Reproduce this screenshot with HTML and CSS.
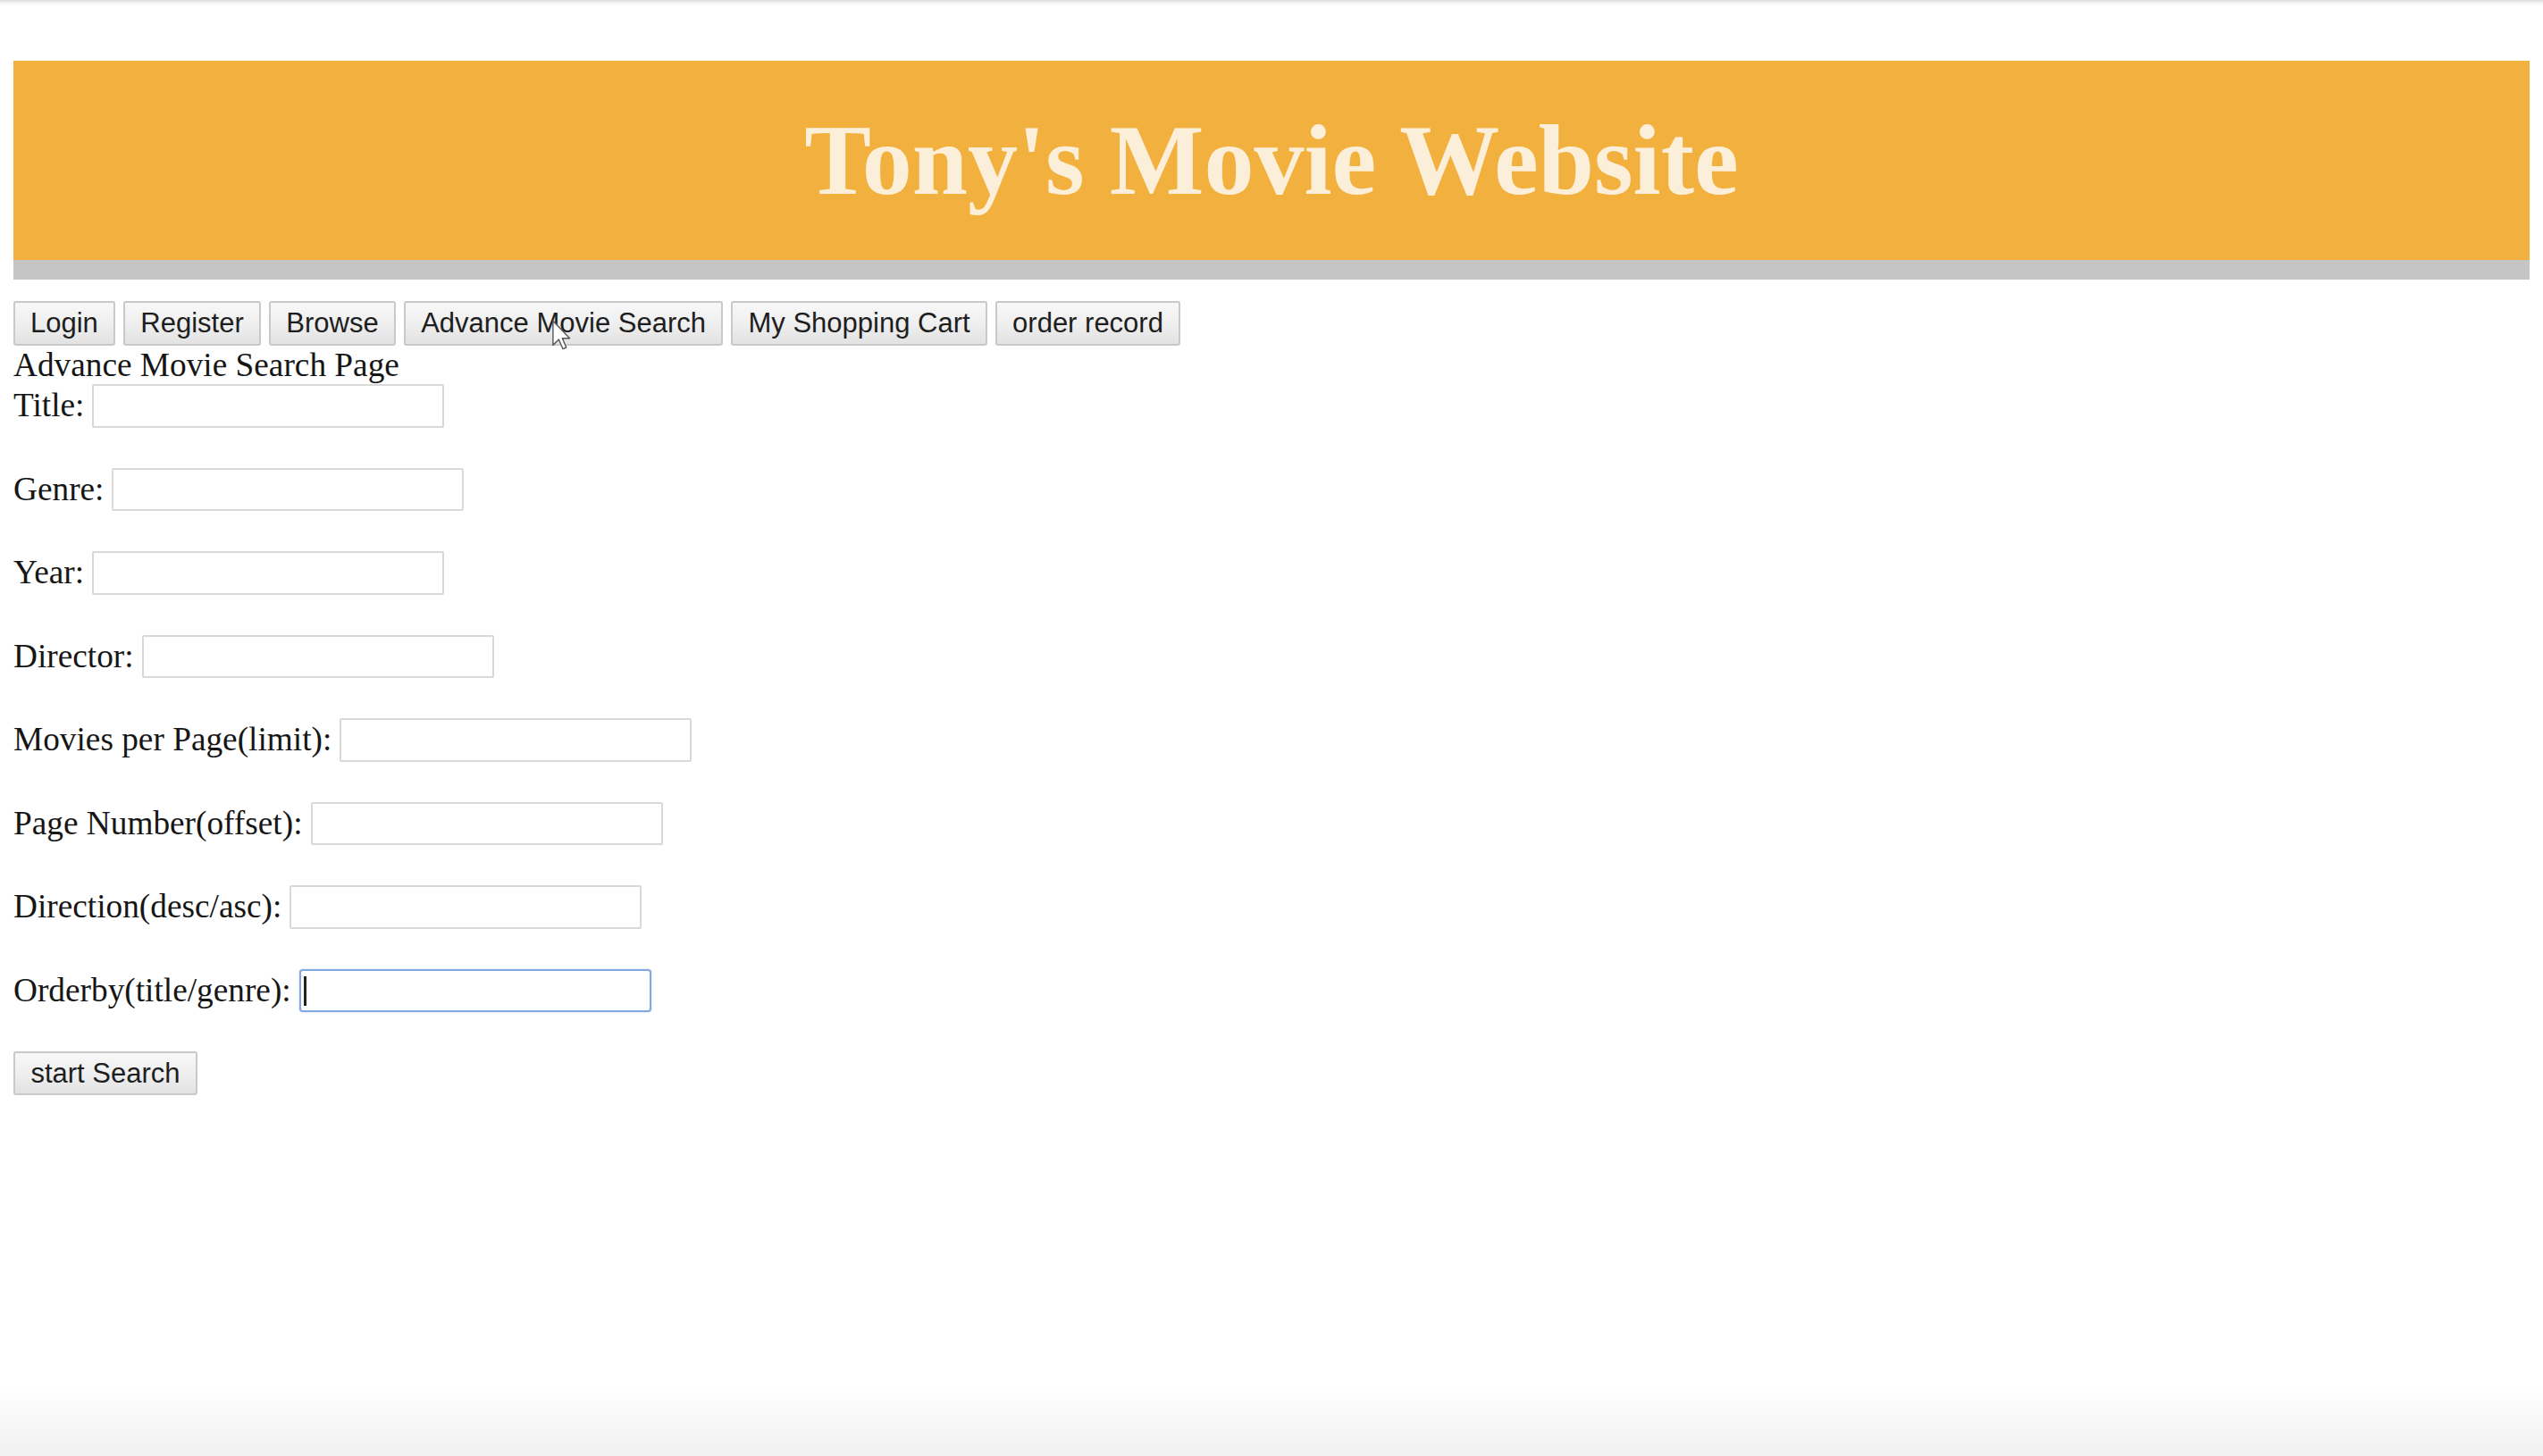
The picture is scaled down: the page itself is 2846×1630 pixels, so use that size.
FILE: index.html
```html
<!DOCTYPE html>
<html lang="en">
<head>
<meta charset="utf-8">
<title>Tony's Movie Website</title>
<link rel="stylesheet" href="styles.css">
</head>
<body>
<div class="page">
  <header class="banner">
    <h1 class="banner-title">Tony's Movie Website</h1>
  </header>
  <nav class="nav">
    <button class="btn">Login</button>
    <button class="btn">Register</button>
    <button class="btn">Browse</button>
    <button class="btn btn-hover">Advance Movie Search<svg class="cursor" viewBox="0 0 12 19" width="21" height="34"><path d="M0.5 0.5 L0.5 16 L4.2 12.4 L6.8 18.4 L9 17.5 L6.5 11.6 L11.2 11.6 Z" fill="#fff" stroke="#555" stroke-width="0.8" stroke-linejoin="round"/></svg></button>
    <button class="btn">My Shopping Cart</button>
    <button class="btn">order record</button>
  </nav>
  <div class="page-heading">Advance Movie Search Page</div>
  <form class="search-form">
    <div class="row"><span class="label">Title:</span><input class="field" type="text"></div>
    <div class="row"><span class="label">Genre:</span><input class="field" type="text"></div>
    <div class="row"><span class="label">Year:</span><input class="field" type="text"></div>
    <div class="row"><span class="label">Director:</span><input class="field" type="text"></div>
    <div class="row"><span class="label">Movies per Page(limit):</span><input class="field" type="text"></div>
    <div class="row"><span class="label">Page Number(offset):</span><input class="field" type="text"></div>
    <div class="row"><span class="label">Direction(desc/asc):</span><input class="field" type="text"></div>
    <div class="row"><span class="label">Orderby(title/genre):</span><span class="caret-wrap"><input class="field field-focus" type="text"></span></div>
    <button class="btn btn-submit" type="button">start Search</button>
  </form>
</div>
</body>
</html>
```

FILE: styles.css
```css
html {
  height: 100%;
}

body {
  margin: 0;
  min-height: 100%;
  background: linear-gradient(to bottom, #dcdcdc 0px, #f4f4f4 3px, #ffffff 7px, #ffffff calc(100% - 80px), #f1f1f1 100%);
  font-family: "Liberation Serif", "Times New Roman", serif;
  font-size: 37.3px;
  color: #161616;
}

.page {
  padding: 68px 15px 0 15px;
}

.banner {
  height: 223px;
  background: #f2b03f;
  border-bottom: 22px solid #c5c5c5;
  display: flex;
  align-items: center;
  justify-content: center;
}

.banner-title {
  margin: 0;
  font-family: "Liberation Serif", "Times New Roman", serif;
  font-weight: bold;
  font-size: 112px;
  line-height: 1.15;
  color: #fcefd9;
  letter-spacing: 0;
}

.nav {
  margin-top: 24px;
  display: flex;
  gap: 9.5px;
  height: 50px;
}

.btn {
  position: relative;
  box-sizing: border-box;
  height: 50px;
  padding: 0 17px;
  border: 2px solid #c9c9c9;
  border-radius: 3px;
  background: linear-gradient(to bottom, #f8f8f8 0%, #efefef 50%, #e2e2e2 100%);
  font-family: "Liberation Sans", Arial, sans-serif;
  font-size: 31px;
  color: #1e1e1e;
  line-height: 44px;
  white-space: nowrap;
}

.cursor {
  position: absolute;
  left: 164px;
  top: 19px;
}

.page-heading {
  line-height: 43px;
  height: 43px;
}

.search-form {
  display: flex;
  flex-direction: column;
  align-items: flex-start;
}

.row {
  display: flex;
  align-items: center;
  gap: 9px;
  height: 48.5px;
  margin-bottom: 45px;
}

.label {
  line-height: 48.5px;
  white-space: nowrap;
}

.field {
  box-sizing: border-box;
  width: 394px;
  height: 48.5px;
  margin: 0;
  border: 2px solid #d9d9d9;
  border-radius: 2px;
  background: #fff;
  padding: 0 6px;
  font-family: "Liberation Sans", Arial, sans-serif;
  font-size: 31px;
  outline: none;
}

.caret-wrap {
  position: relative;
  display: inline-flex;
}

.field-focus {
  border: 2.5px solid #82a9e2;
  border-radius: 4px;
  box-shadow: 0 0 2px rgba(120, 160, 225, 0.6);
}

.caret-wrap::after {
  content: "";
  position: absolute;
  left: 5px;
  top: 8px;
  width: 3px;
  height: 33px;
  background: #222;
}

.btn-submit {
  margin-top: -1px;
  width: 206px;
  height: 49px;
}
```
